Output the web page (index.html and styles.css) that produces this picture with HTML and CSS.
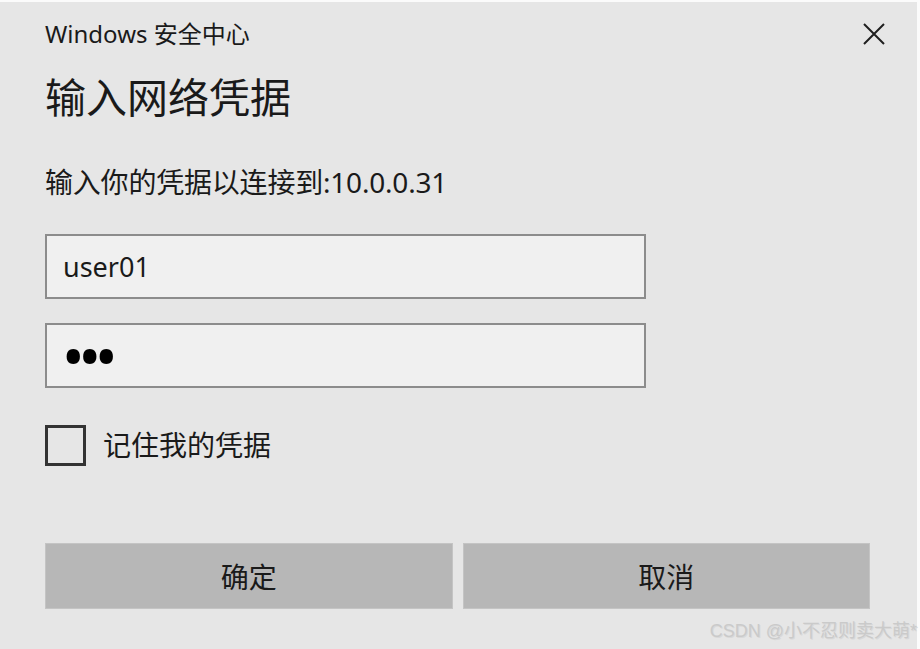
FILE: index.html
```html
<!DOCTYPE html>
<html>
  <head>
    <meta charset="utf-8">
    <link rel="stylesheet" href="styles.css">
  </head>

  <body>
    <div class="dialog">
      <div class="dialog-header">
        <span class="app-title">Windows 安全中心</span>
        <button class="close" aria-label="关闭">
          <svg width="22" height="22" viewBox="0 0 22 22">
            <path d="M1 1 L21 21 M21 1 L1 21" stroke="#1f1f1f" stroke-width="2" fill="none" />
          </svg>
        </button>
      </div>

      <div class="dialog-body">
        <h1>输入网络凭据</h1>
        <p class="hint">输入你的凭据以连接到:10.0.0.31</p>

        <input type="text" class="field" id="username" value="user01" />
        <input type="password" class="field field-password" id="password" value="abc" />

        <label class="remember">
          <span class="checkbox"></span>
          <span>记住我的凭据</span>
        </label>

        <div class="actions">
          <button class="btn" id="ok">确定</button>
          <button class="btn" id="cancel">取消</button>
        </div>
      </div>

      <div class="watermark">CSDN @小不忍则卖大萌*</div>
    </div>
  </body>
</html>
```

FILE: styles.css
```css
html {
  background-color: #fbfbfb;
}

body {
  margin: 0;
  font-family: "Noto Sans", "Noto Sans CJK SC", sans-serif;
  color: #1a1a1a;
}

.dialog {
  position: relative;
  width: 917px;
  height: 647px;
  margin-top: 2px;
  background-color: #e6e6e6;
}

.dialog-header {
  display: flex;
  justify-content: space-between;
  align-items: flex-start;
  padding: 15px 32px 0 45px;
}

.app-title {
  font-size: 24px;
  line-height: 34px;
}

.close {
  margin-top: 6px;
  padding: 0;
  border: none;
  background: none;
  width: 22px;
  height: 22px;
  cursor: pointer;
}

.close svg {
  display: block;
}

.dialog-body {
  padding: 0 47px 0 45px;
}

h1 {
  margin: 18px 0 0;
  font-size: 41px;
  font-weight: normal;
  line-height: 56px;
}

.hint {
  margin: 37px 0 0;
  font-size: 28px;
  line-height: 40px;
  letter-spacing: -0.2px;
}

.field {
  display: block;
  box-sizing: border-box;
  width: 601px;
  height: 65px;
  margin: 32px 0 0;
  padding: 0 16px;
  border: 2px solid #8c8c8c;
  background-color: #f0f0f0;
  font-family: "Noto Sans", sans-serif;
  font-size: 27px;
  color: #1a1a1a;
  outline: none;
}

.field-password {
  margin-top: 24px;
  padding-left: 15px;
  font-size: 60px;
  letter-spacing: -6px;
  color: #000;
}

.remember {
  display: flex;
  align-items: center;
  gap: 17px;
  margin-top: 37px;
  font-size: 28px;
  line-height: 41px;
}

.checkbox {
  box-sizing: border-box;
  width: 41px;
  height: 41px;
  border: 3px solid #333;
}

.actions {
  display: flex;
  gap: 10px;
  margin-top: 77px;
}

.btn {
  flex: 1;
  height: 66px;
  border: 1px solid #c4c4c4;
  background-color: #b7b7b7;
  font-family: "Noto Sans CJK SC", sans-serif;
  font-size: 28px;
  color: #1a1a1a;
  cursor: pointer;
}

.watermark {
  position: absolute;
  right: 0;
  bottom: 7px;
  font-family: "Liberation Sans", "Noto Sans CJK SC", sans-serif;
  font-size: 18px;
  line-height: 22px;
  color: #cacaca;
  text-shadow: 1px 1px 0 #d9d9d9;
}
```
